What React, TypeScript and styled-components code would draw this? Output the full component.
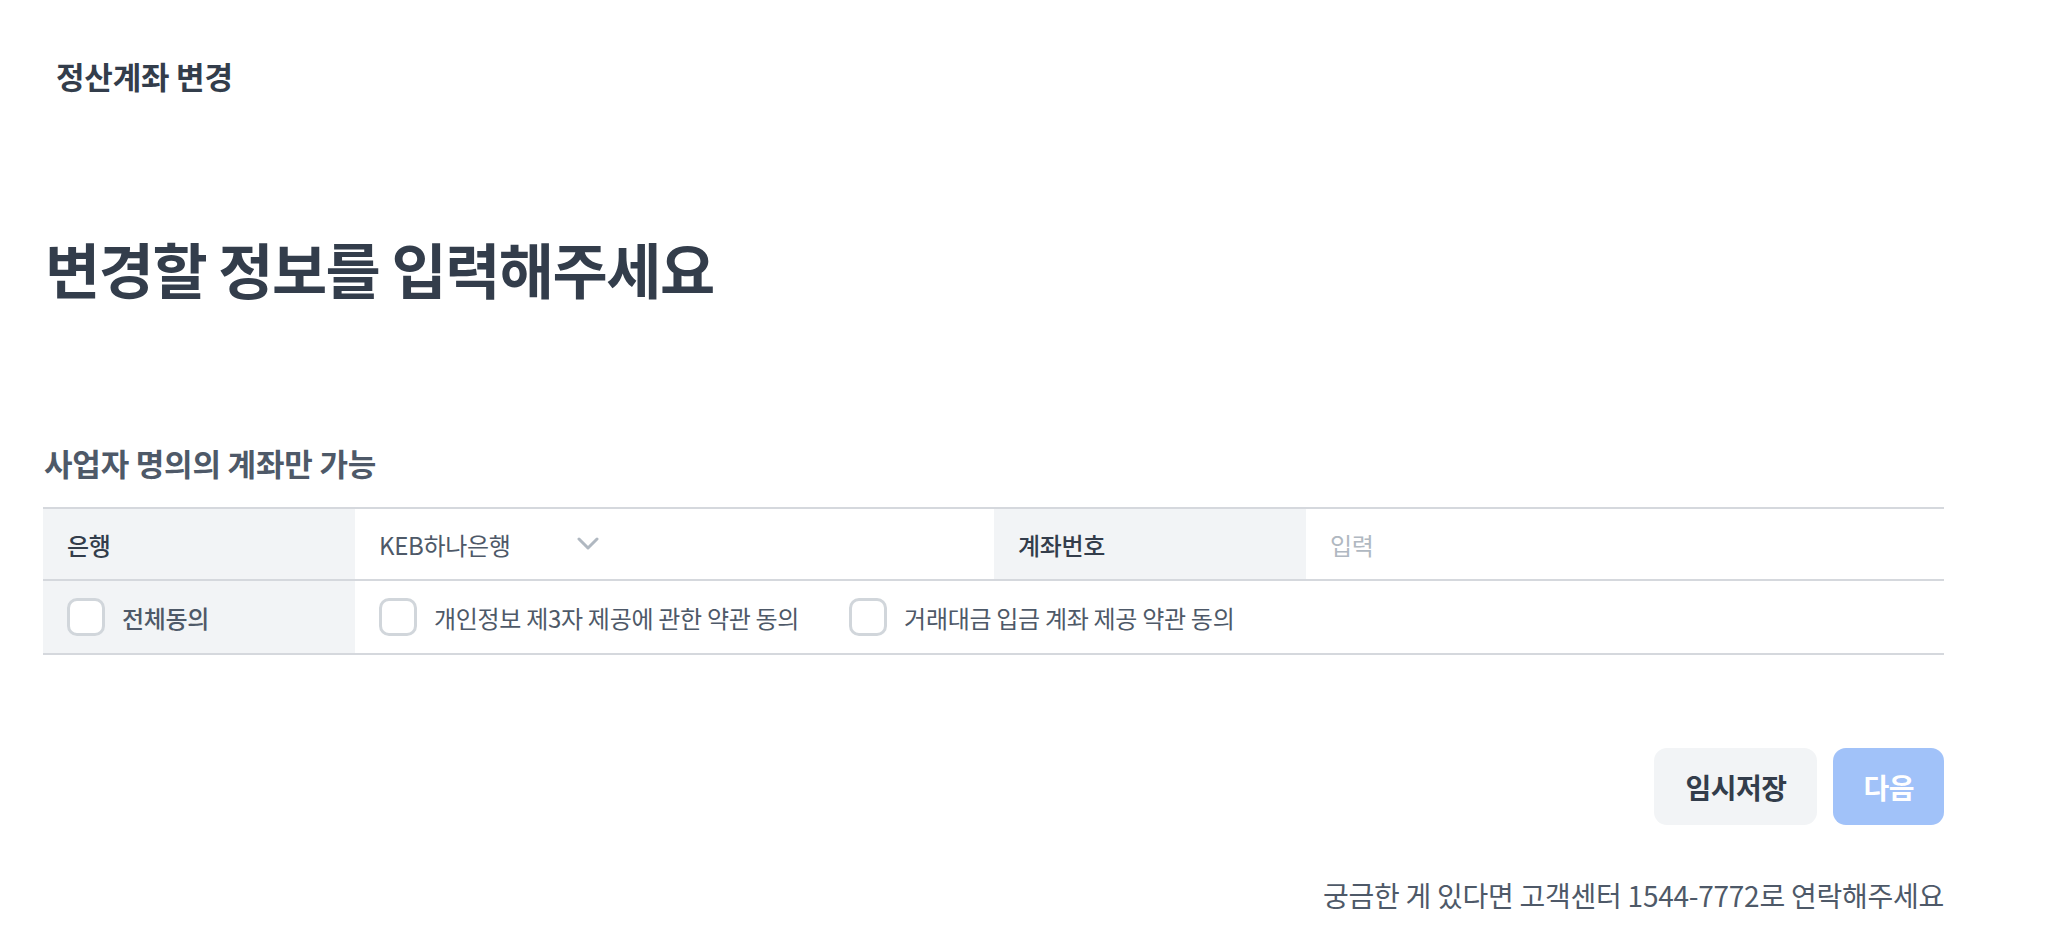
import React from "react";
import styled, { createGlobalStyle } from "styled-components";

const GlobalStyle = createGlobalStyle`
  html, body { margin: 0; padding: 0; background: #ffffff; }
  body {
    font-family: "Noto Sans CJK KR", "Noto Sans", sans-serif;
    color: #333d4b;
  }
  * { box-sizing: border-box; }
`;

const Page = styled.div`
  display: flex;
  flex-direction: column;
  padding: 0 104px 0 43px;
`;

const TopTitle = styled.h1`
  margin: 60px 0 0 13px;
  font-size: 31px;
  line-height: 32px;
  font-weight: 700;
  color: #333d4b;
  letter-spacing: -0.2px;
`;

const Headline = styled.h2`
  margin: 145px 0 0 2px;
  font-size: 60px;
  line-height: 62px;
  font-weight: 700;
  color: #333d4b;
  letter-spacing: -1.5px;
`;

const SubTitle = styled.h3`
  margin: 148px 0 0 1px;
  font-size: 31px;
  line-height: 31px;
  font-weight: 700;
  color: #4e5968;
  letter-spacing: -0.2px;
`;

const Table = styled.div`
  margin-top: 29px;
  border-top: 2px solid #d5d8dd;
  display: flex;
  flex-direction: column;
`;

const Row = styled.div<{ $height: number }>`
  display: grid;
  grid-template-columns: 312px 639px 312px 1fr;
  height: ${(p) => p.$height}px;
  border-bottom: 2px solid #d5d8dd;
`;

const LabelCell = styled.div`
  background: #f2f4f6;
  display: flex;
  align-items: center;
  padding-left: 24px;
  font-size: 24px;
  font-weight: 500;
  color: #333d4b;
  letter-spacing: -0.3px;
`;

const ValueCell = styled.div<{ $span?: number }>`
  display: flex;
  align-items: center;
  padding-left: 24px;
  grid-column: span ${(p) => p.$span ?? 1};
  font-size: 24px;
  color: #4e5968;
  letter-spacing: -0.3px;
`;

const Select = styled.div`
  width: 220px;
  display: flex;
  align-items: center;
  justify-content: space-between;
  color: #4e5968;
`;

const Placeholder = styled.span`
  color: #b0b8c1;
`;

const CheckGroup = styled.div`
  display: flex;
  align-items: center;
  gap: 50px;
`;

const CheckLabel = styled.label`
  display: flex;
  align-items: center;
  gap: 17px;
  font-size: 24px;
  color: #4e5968;
  letter-spacing: -0.3px;
`;

const Box = styled.span`
  width: 38px;
  height: 38px;
  border: 3px solid #d1d6db;
  border-radius: 10px;
  background: #ffffff;
  flex-shrink: 0;
`;

const Actions = styled.div`
  margin-top: 93px;
  display: flex;
  justify-content: flex-end;
  gap: 16px;
`;

const Button = styled.button<{ $primary?: boolean }>`
  height: 77px;
  padding: 0 ${(p) => (p.$primary ? 30 : 31)}px;
  border: none;
  border-radius: 13px;
  font-family: inherit;
  font-size: 28px;
  font-weight: 700;
  letter-spacing: -0.5px;
  background: ${(p) => (p.$primary ? "#a1c2f9" : "#f2f4f6")};
  color: ${(p) => (p.$primary ? "#ffffff" : "#333d4b")};
`;

const Footer = styled.p`
  margin: 56px 0 0;
  text-align: right;
  font-size: 28px;
  line-height: 28px;
  color: #4e5968;
  letter-spacing: -0.25px;
`;

const Chevron = () => (
  <svg width="22" height="14" viewBox="0 0 22 14" fill="none">
    <path d="M2 2l9 9 9-9" stroke="#b0b8c1" strokeWidth="3" strokeLinecap="round" strokeLinejoin="round" />
  </svg>
);

const Check = ({ children }: { children: React.ReactNode }) => (
  <CheckLabel>
    <Box />
    {children}
  </CheckLabel>
);

export default function App() {
  return (
    <>
      <GlobalStyle />
      <Page>
        <TopTitle>정산계좌 변경</TopTitle>
        <Headline>변경할 정보를 입력해주세요</Headline>
        <SubTitle>사업자 명의의 계좌만 가능</SubTitle>
        <Table>
          <Row $height={72}>
            <LabelCell>은행</LabelCell>
            <ValueCell>
              <Select>
                <span>KEB하나은행</span>
                <Chevron />
              </Select>
            </ValueCell>
            <LabelCell>계좌번호</LabelCell>
            <ValueCell>
              <Placeholder>입력</Placeholder>
            </ValueCell>
          </Row>
          <Row $height={74}>
            <LabelCell>
              <Check>전체동의</Check>
            </LabelCell>
            <ValueCell $span={3}>
              <CheckGroup>
                <Check>개인정보 제3자 제공에 관한 약관 동의</Check>
                <Check>거래대금 입금 계좌 제공 약관 동의</Check>
              </CheckGroup>
            </ValueCell>
          </Row>
        </Table>
        <Actions>
          <Button>임시저장</Button>
          <Button $primary>다음</Button>
        </Actions>
        <Footer>궁금한 게 있다면 고객센터 1544-7772로 연락해주세요</Footer>
      </Page>
    </>
  );
}
